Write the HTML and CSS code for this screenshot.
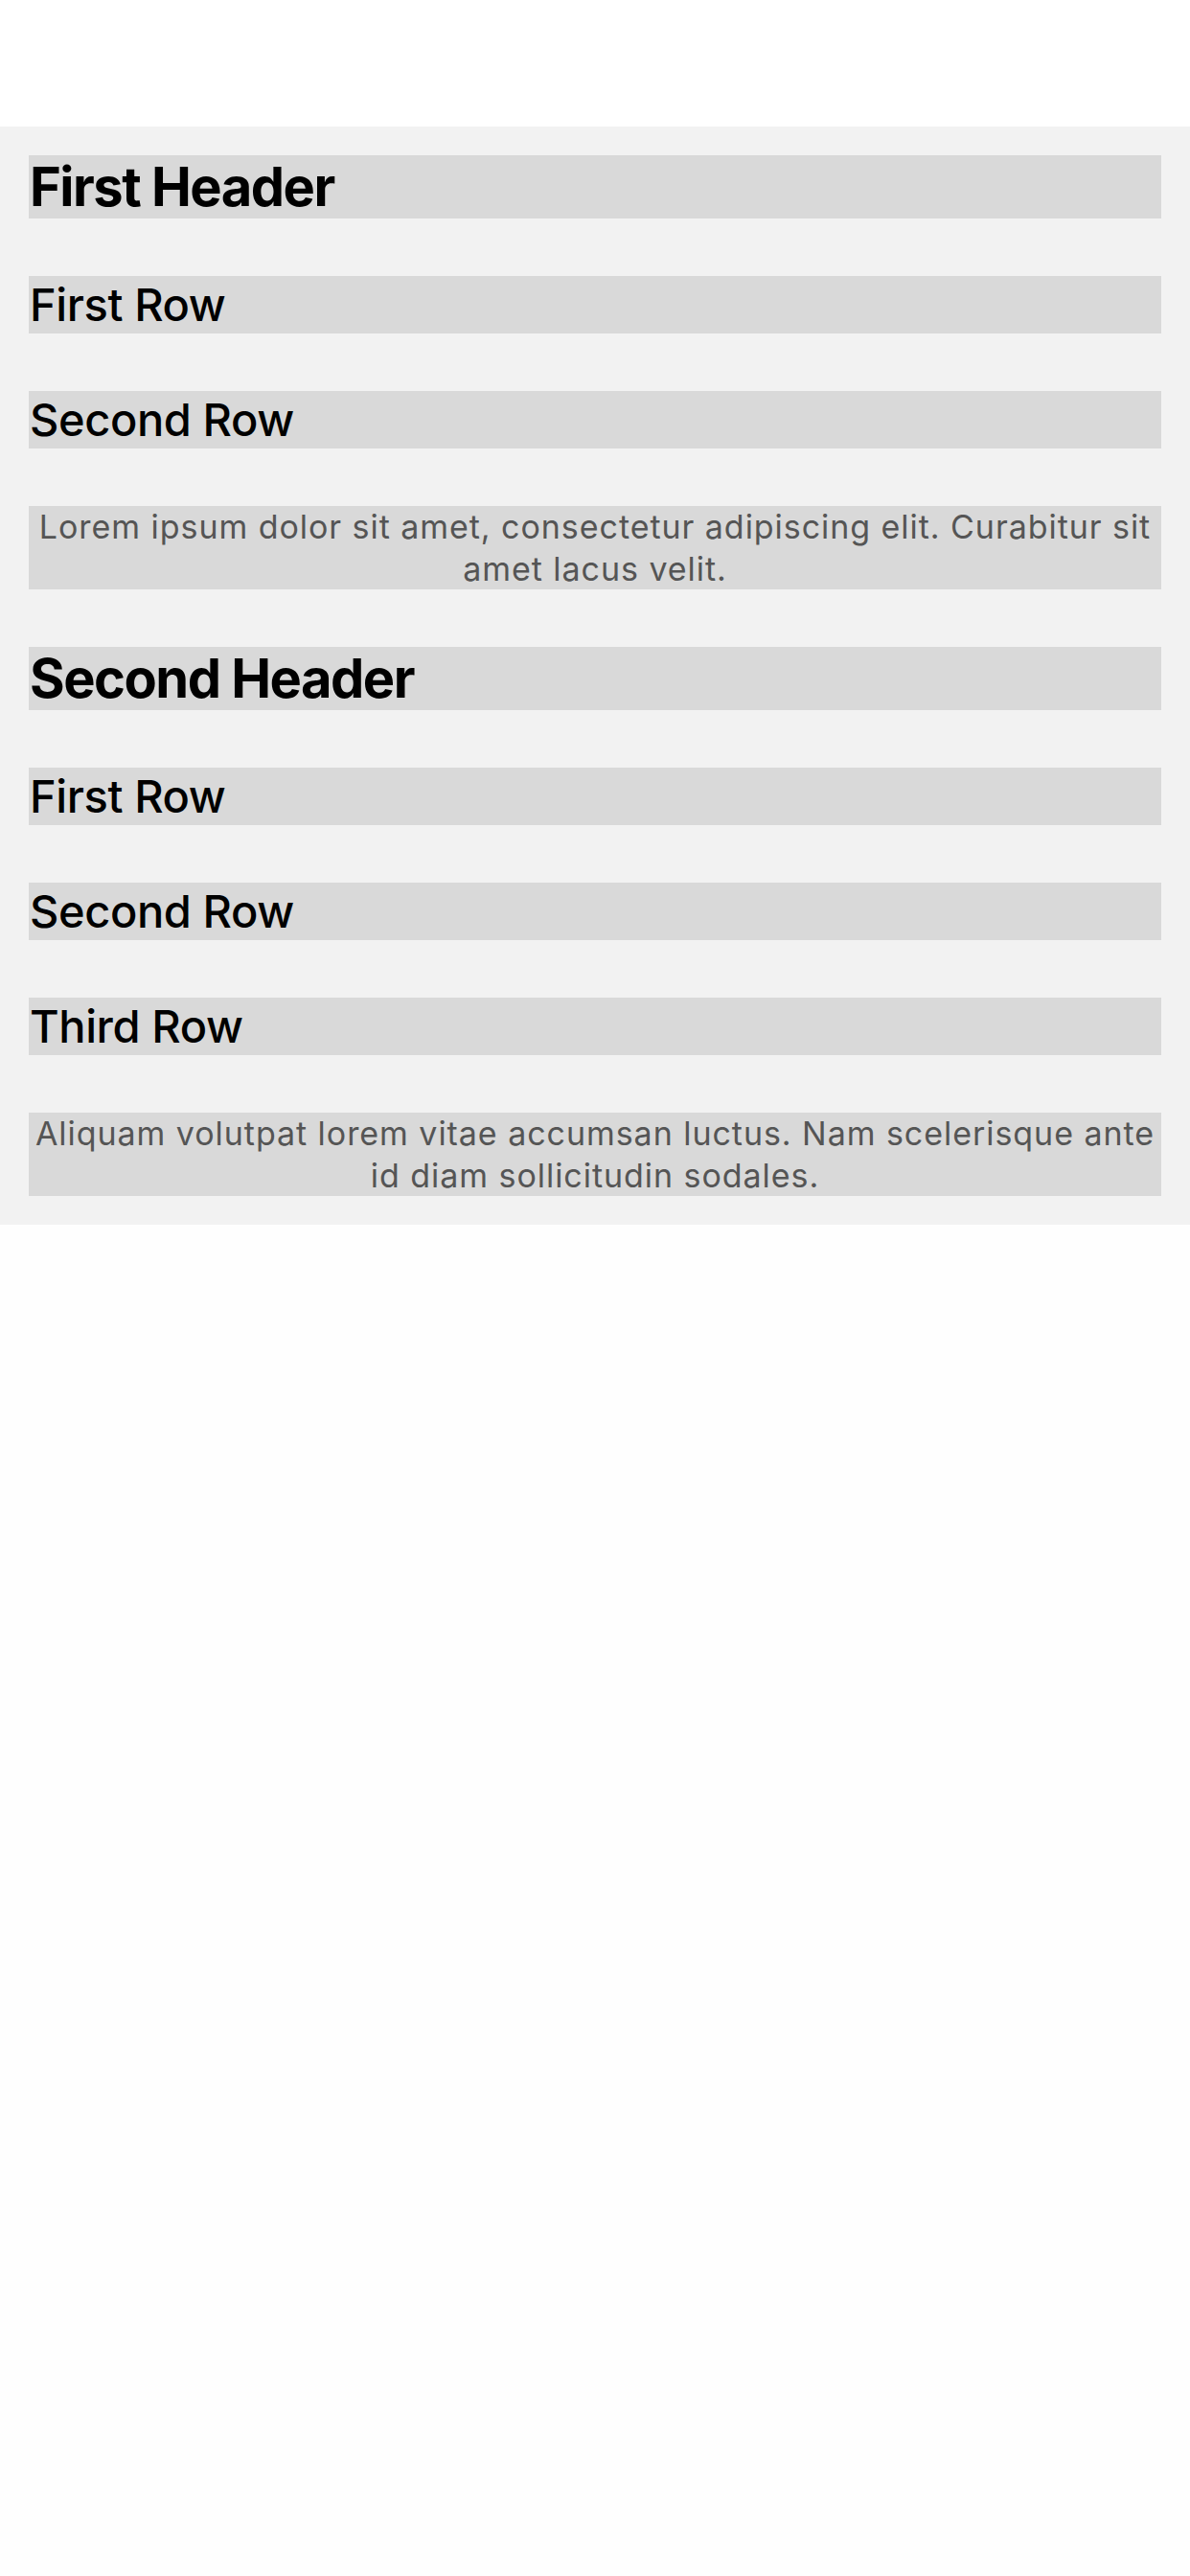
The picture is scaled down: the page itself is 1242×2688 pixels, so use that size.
FILE: index.html
```html
<!DOCTYPE html>
<html lang="en">
<head>
<meta charset="utf-8">
<title>List</title>
<link rel="stylesheet" href="styles.css">
</head>
<body>
<div class="topbar"></div>
<main class="panel">
  <div class="block header">First Header</div>
  <div class="block row">First Row</div>
  <div class="block row">Second Row</div>
  <div class="block para">Lorem ipsum dolor sit amet, consectetur adipiscing elit. Curabitur sit amet lacus velit.</div>
  <div class="block header">Second Header</div>
  <div class="block row">First Row</div>
  <div class="block row">Second Row</div>
  <div class="block row">Third Row</div>
  <div class="block para">Aliquam volutpat lorem vitae accumsan luctus. Nam scelerisque ante id diam sollicitudin sodales.</div>
</main>
</body>
</html>
```
FILE: styles.css
```css
html, body {
  margin: 0;
  padding: 0;
}
body {
  background: #fefefe;
  font-family: Inter, "Noto Sans", "Liberation Sans", sans-serif;
  width: 1242px;
  min-height: 2688px;
}
.topbar {
  height: 132px;
  background: #ffffff;
}
.panel {
  background: #f2f2f2;
  padding: 30px;
  display: flex;
  flex-direction: column;
  gap: 60px;
}
.block {
  background: #d9d9d9;
  color: #000;
}
.header {
  font-size: 56px;
  line-height: 66px;
  font-weight: 700;
  letter-spacing: -1.5px;
  padding-left: 1px;
}
.row {
  font-size: 47px;
  line-height: 60px;
  font-weight: 500;
  letter-spacing: -0.4px;
  padding-left: 1px;
}
.para {
  font-size: 34px;
  line-height: 43.5px;
  font-weight: 400;
  color: #555555;
  text-align: center;
  letter-spacing: 0.95px;
}
```
